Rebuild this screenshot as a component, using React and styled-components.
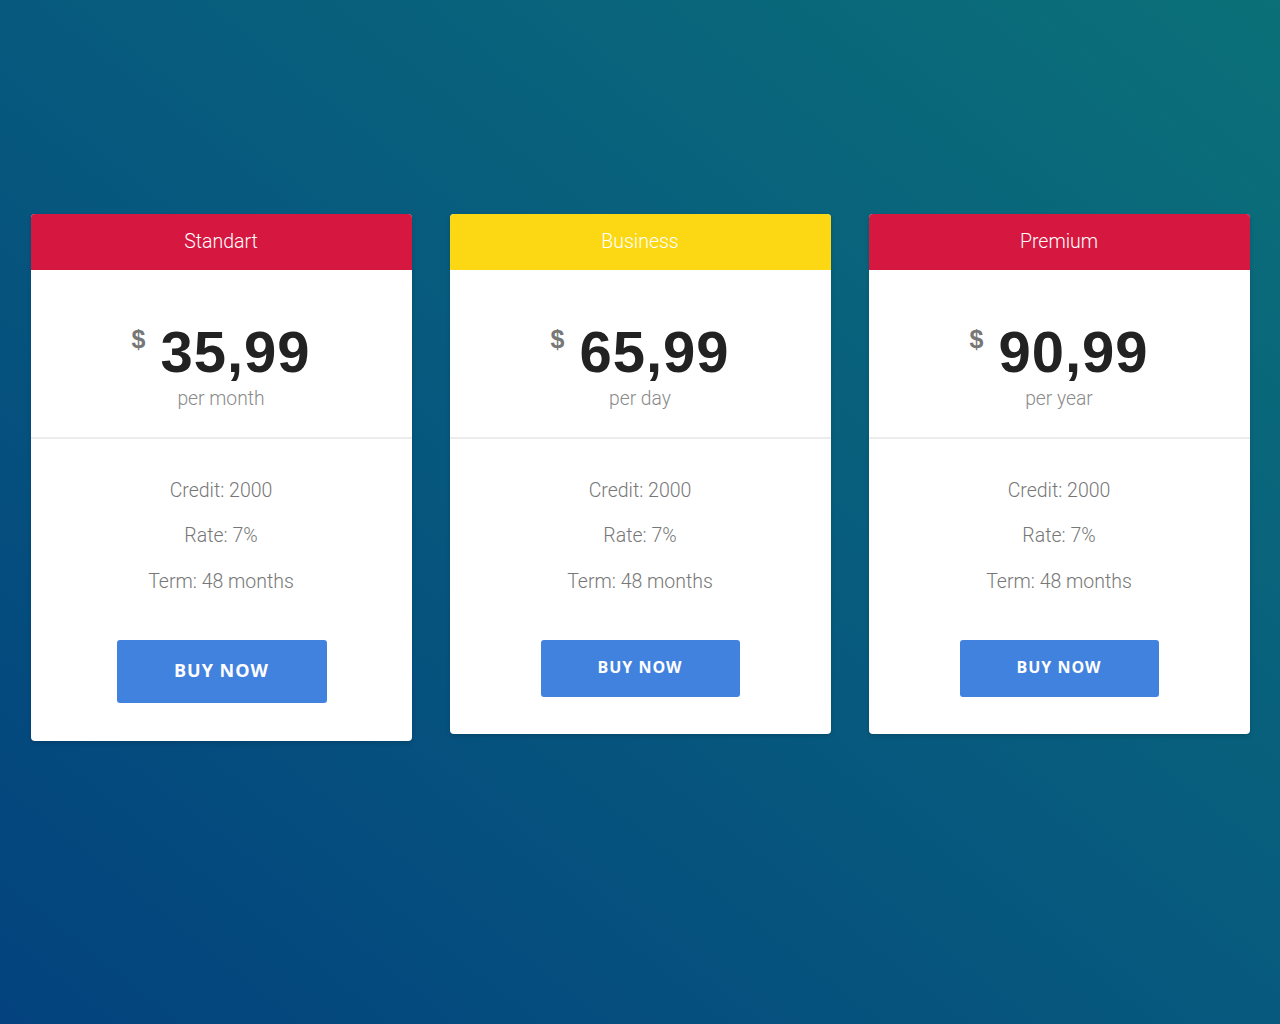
import React from "react";
import styled, { createGlobalStyle } from "styled-components";

const Global = createGlobalStyle`
  html, body { margin: 0; padding: 0; }
  body {
    min-height: 1024px;
    background: linear-gradient(to top right, #03427e 0%, #075a7e 50%, #0b7078 100%);
    font-family: Roboto, "Liberation Sans", sans-serif;
  }
`;

const Page = styled.main`
  display: grid;
  grid-template-columns: repeat(3, 381px);
  column-gap: 38px;
  justify-content: center;
  align-items: start;
  padding-top: 214px;
  box-sizing: border-box;
  min-height: 1024px;
`;

const Card = styled.section`
  background: #fff;
  border-radius: 4px;
  overflow: hidden;
  box-shadow: 0 2px 4px rgba(0, 0, 0, 0.15);
  display: flex;
  flex-direction: column;
  align-items: stretch;
`;

const Header = styled.header`
  height: 56px;
  padding-bottom: 2px;
  box-sizing: border-box;
  background: ${(p) => p.$color};
  color: #fff;
  font-family: Roboto, sans-serif;
  font-weight: 300;
  font-size: 19.5px;
  display: flex;
  align-items: center;
  justify-content: center;
`;

const PriceBlock = styled.div`
  padding: 53px 0 27px;
  border-bottom: 2px solid #ececec;
  display: flex;
  flex-direction: column;
  align-items: center;
`;

const PriceRow = styled.div`
  display: flex;
  align-items: flex-start;
  gap: 15px;
`;

const Currency = styled.span`
  font-family: "Liberation Sans", Arial, sans-serif;
  font-weight: 700;
  font-size: 25px;
  line-height: 1;
  color: #777;
  margin-top: 4px;
`;

const Amount = styled.span`
  font-family: "Liberation Sans", Arial, sans-serif;
  font-weight: 700;
  font-size: 58px;
  line-height: 58px;
  color: #222;
  letter-spacing: 1px;
`;

const Period = styled.div`
  margin-top: 7px;
  font-family: Roboto, sans-serif;
  font-weight: 300;
  font-size: 19.3px;
  line-height: 22px;
  color: #8a8a8a;
`;

const Features = styled.ul`
  list-style: none;
  margin: 0;
  padding: 28.5px 0 0;
  text-align: center;
`;

const Feature = styled.li`
  font-family: Roboto, sans-serif;
  font-weight: 300;
  font-size: 19.5px;
  line-height: 45.5px;
  color: #777;
`;

const Footer = styled.div`
  display: flex;
  justify-content: center;
  padding: 36px 0 ${(p) => (p.$big ? 38 : 37)}px;
`;

const BuyButton = styled.button`
  width: ${(p) => (p.$big ? 210 : 199)}px;
  height: ${(p) => (p.$big ? 63 : 57)}px;
  margin-left: ${(p) => (p.$big ? 1 : 0)}px;
  padding: 0 0 3px;
  border: none;
  border-radius: 3px;
  background: #4282df;
  color: #fff;
  font-family: "Open Sans", "Liberation Sans", sans-serif;
  font-weight: 700;
  font-size: ${(p) => (p.$big ? 18 : 16)}px;
  letter-spacing: 1px;
  cursor: pointer;
`;

const plans = [
  { name: "Standart", color: "#d6173f", price: "35,99", period: "per month", big: true },
  { name: "Business", color: "#fbd714", price: "65,99", period: "per day" },
  { name: "Premium", color: "#d6173f", price: "90,99", period: "per year" },
];

export default function App() {
  return (
    <>
      <Global />
      <Page>
        {plans.map((p) => (
          <Card key={p.name}>
            <Header $color={p.color}>{p.name}</Header>
            <PriceBlock>
              <PriceRow>
                <Currency>$</Currency>
                <Amount>{p.price}</Amount>
              </PriceRow>
              <Period>{p.period}</Period>
            </PriceBlock>
            <Features>
              <Feature>Credit: 2000</Feature>
              <Feature>Rate: 7%</Feature>
              <Feature>Term: 48 months</Feature>
            </Features>
            <Footer $big={p.big}>
              <BuyButton $big={p.big}>BUY NOW</BuyButton>
            </Footer>
          </Card>
        ))}
      </Page>
    </>
  );
}
